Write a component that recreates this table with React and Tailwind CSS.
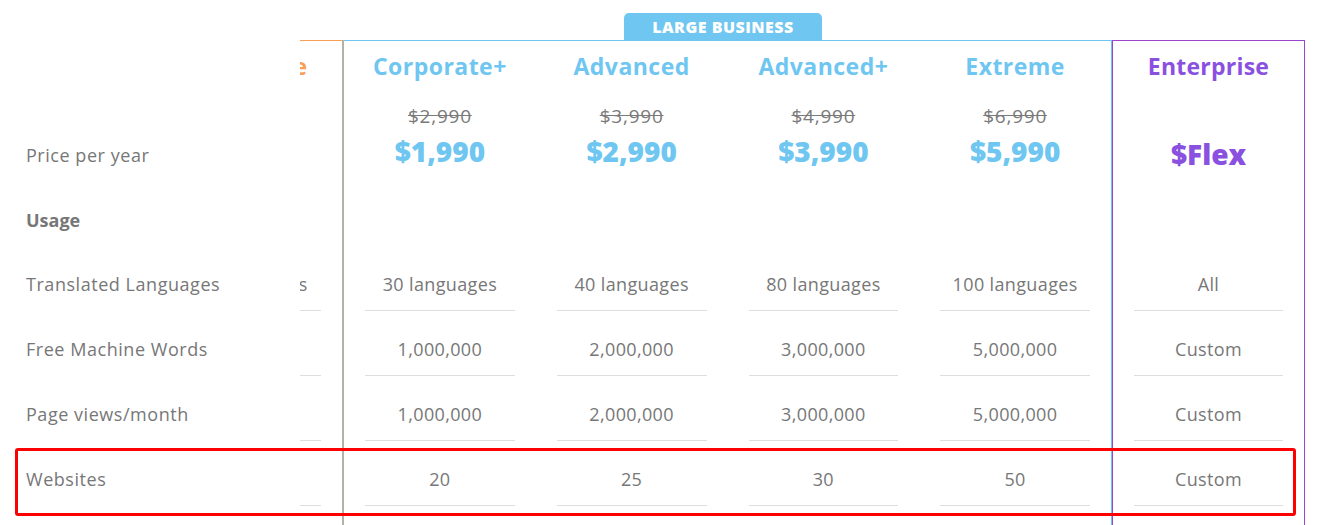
const blue = "text-[#6ec6f1]";

const labels = ["Translated Languages", "Free Machine Words", "Page views/month", "Websites"];

const plans = [
    { name: "Corporate+", old: "$2,990", price: "$1,990", values: ["30 languages", "1,000,000", "1,000,000", "20"] },
    { name: "Advanced", old: "$3,990", price: "$2,990", values: ["40 languages", "2,000,000", "2,000,000", "25"] },
    { name: "Advanced+", old: "$4,990", price: "$3,990", values: ["80 languages", "3,000,000", "3,000,000", "30"] },
    { name: "Extreme", old: "$6,990", price: "$5,990", values: ["100 languages", "5,000,000", "5,000,000", "50"] },
];

const ValueCell = ({ children, className = "" }) => (
    <div className="h-[65px] px-[21px]">
        <div className={`h-full border-b border-[#dedede] pt-[26px] text-center text-[18px] leading-[24px] tracking-[0.02em] text-[#777] whitespace-nowrap ${className}`}>
            {children}
        </div>
    </div>
);

const EmptyCell = () => <div className="h-[65px]" />;

const PlanColumn = ({ plan }) => (
    <div className="flex-1 min-w-0 flex flex-col">
        <div className="h-[140px] flex flex-col items-center">
            <div className={`mt-[10px] text-[23px] leading-[30px] font-bold tracking-[0.02em] ${blue}`}>{plan.name}</div>
            <div className="mt-[23px] text-[19px] leading-[24px] tracking-[0.04em] text-[#7a7a7a] line-through">{plan.old}</div>
            <div className={`mt-[5px] text-[28px] leading-[36px] font-extrabold ${blue}`}>{plan.price}</div>
        </div>
        <EmptyCell />
        {plan.values.map((v, i) => (
            <ValueCell key={i}>{v}</ValueCell>
        ))}
    </div>
);

export default function App() {
    return (
        <div
            className="relative w-[1323px] h-[525px] bg-white overflow-hidden flex"
            style={{ fontFamily: '"Open Sans", "Noto Sans", sans-serif' }}
        >
            {/* labels */}
            <div className="w-[300px] shrink-0 pl-[26px] text-[18px] leading-[24px] tracking-[0.03em] text-[#777]">
                <div className="h-[181px] pt-[143px]">Price per year</div>
                <div className="h-[65px] pt-[27px] font-bold tracking-normal">Usage</div>
                {labels.map((l) => (
                    <div key={l} className="h-[65px] pt-[26px]">{l}</div>
                ))}
            </div>

            {/* clipped orange column, scrolled out of view */}
            <div className="w-[43px] shrink-0 overflow-hidden pt-[40px]">
                <div className="w-[192px] -ml-[149px] h-[600px] border-t border-r border-[#f99f55]">
                    <div className="h-[140px] flex flex-col items-center">
                        <div className="mt-[10px] ml-[2px] text-[23px] leading-[30px] font-bold tracking-[0.02em] text-[#f99f55]">Corporate</div>
                    </div>
                    <EmptyCell />
                    <ValueCell className="pl-[8px]">20 languages</ValueCell>
                    <ValueCell>&nbsp;</ValueCell>
                    <ValueCell>&nbsp;</ValueCell>
                    <ValueCell>&nbsp;</ValueCell>
                </div>
            </div>

            {/* large business group */}
            <div className="w-[769px] shrink-0 flex flex-col">
                <div className="mt-[13px] ml-[281px] w-[198px] h-[27px] rounded-t-[5px] bg-[#6ec6f1] flex items-center justify-center text-[16px] font-extrabold tracking-[0.03em] text-white">
                    LARGE BUSINESS
                </div>
                <div className="flex-1 flex border-l border-t border-r border-[#6ec6f1]">
                    {plans.map((p) => (
                        <PlanColumn key={p.name} plan={p} />
                    ))}
                </div>
            </div>

            {/* enterprise */}
            <div className="w-[193px] shrink-0 pt-[40px]">
                <div className="h-[600px] border border-[#9d45cc] flex flex-col">
                    <div className="h-[140px] flex flex-col items-center">
                        <div className="mt-[10px] text-[23px] leading-[30px] font-bold tracking-[0.01em] text-[#8a50e0]">Enterprise</div>
                        <div className="mt-[55px] text-[28px] leading-[36px] font-extrabold text-[#8a50e0]">$Flex</div>
                    </div>
                    <EmptyCell />
                    <ValueCell>All</ValueCell>
                    <ValueCell>Custom</ValueCell>
                    <ValueCell>Custom</ValueCell>
                    <ValueCell>Custom</ValueCell>
                </div>
            </div>

            {/* highlight annotation */}
            <div className="absolute left-[15px] top-[448px] w-[1281px] h-[68px] border-[3px] border-[#ff0000] rounded-[3px] pointer-events-none" />
        </div>
    );
}
